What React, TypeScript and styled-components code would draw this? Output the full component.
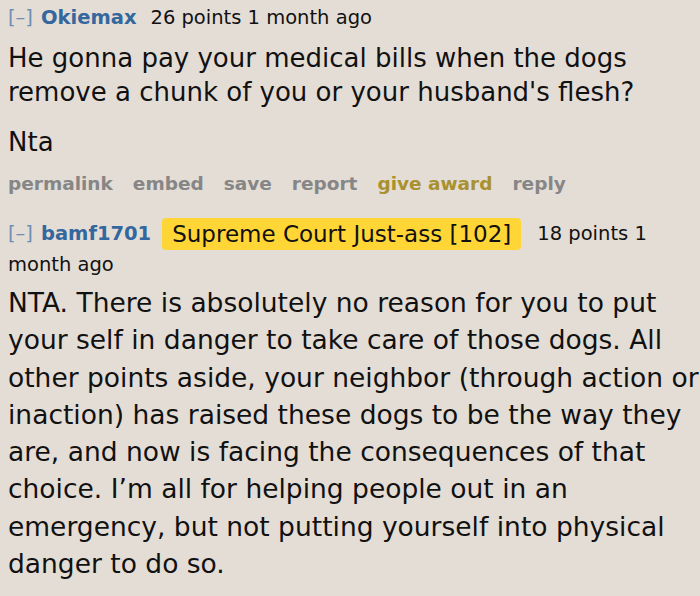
import React from "react";
import styled, { createGlobalStyle } from "styled-components";

const Global = createGlobalStyle`
  html, body { margin: 0; padding: 0; background: #e4ddd6; }
  body { font-family: "DejaVu Sans", Verdana, sans-serif; color: #111; }
`;

const Page = styled.div`
  width: 700px;
  height: 596px;
  box-sizing: border-box;
  padding: 3px 0 0 8px;
  background: #e4ddd6;
  overflow: hidden;
`;

const Comment = styled.div`
  display: flex;
  flex-direction: column;
`;

const Tagline = styled.div`
  font-size: 19.5px;
  line-height: 29px;
  color: #111;
`;

const Expand = styled.span`
  color: #6e8db3;
  margin-right: 8px;
`;

const Author = styled.span`
  color: #33679d;
  font-weight: bold;
  margin-right: 14px;
`;

const Meta = styled.span`
  color: #111;
`;

const Flair = styled.span`
  display: inline-block;
  background: #ffd635;
  color: #111;
  border-radius: 4px;
  font-size: 23px;
  line-height: 32px;
  padding: 0 10px;
  margin: 0 16px 0 -3px;
  vertical-align: middle;
`;

const Body = styled.div<{ $lh: number; $top: number; $size: number }>`
  font-size: ${(p) => p.$size}px;
  line-height: ${(p) => p.$lh}px;
  margin-top: ${(p) => p.$top}px;
`;

const Para = styled.p<{ $gap: number }>`
  margin: 0 0 ${(p) => p.$gap}px 0;
`;

const Line = styled.span`
  display: block;
  white-space: nowrap;
`;

const Actions = styled.div`
  display: flex;
  gap: 20px;
  font-size: 18.5px;
  font-weight: bold;
  line-height: 28px;
  margin-bottom: 20px;
`;

const Action = styled.span<{ $gold?: boolean }>`
  color: ${(p) => (p.$gold ? "#a8912e" : "#868686")};
`;

const secondLines = [
  "NTA. There is absolutely no reason for you to put",
  "your self in danger to take care of those dogs. All",
  "other points aside, your neighbor (through action or",
  "inaction) has raised these dogs to be the way they",
  "are, and now is facing the consequences of that",
  "choice. I’m all for helping people out in an",
  "emergency, but not putting yourself into physical",
  "danger to do so.",
];

export default function App() {
  return (
    <Page>
      <Global />
      <Comment>
        <Tagline>
          <Expand>[–]</Expand>
          <Author>Okiemax</Author>
          <Meta>26 points 1 month ago</Meta>
        </Tagline>
        <Body $lh={34} $top={9} $size={26}>
          <Para $gap={16}>
            <Line>He gonna pay your medical bills when the dogs</Line>
            <Line>remove a chunk of you or your husband's flesh?</Line>
          </Para>
          <Para $gap={11}>Nta</Para>
        </Body>
        <Actions>
          <Action>permalink</Action>
          <Action>embed</Action>
          <Action>save</Action>
          <Action>report</Action>
          <Action $gold>give award</Action>
          <Action>reply</Action>
        </Actions>
      </Comment>
      <Comment>
        <Tagline>
          <Expand>[–]</Expand>
          <Author>bamf1701</Author>
          <Flair>Supreme Court Just-ass [102]</Flair>
          <Meta>18 points 1</Meta> <Meta>month ago</Meta>
        </Tagline>
        <Body $lh={37.3} $top={5} $size={26.5}>
          <Para $gap={0}>
            {secondLines.map((l) => (
              <Line key={l}>{l}</Line>
            ))}
          </Para>
        </Body>
      </Comment>
    </Page>
  );
}
